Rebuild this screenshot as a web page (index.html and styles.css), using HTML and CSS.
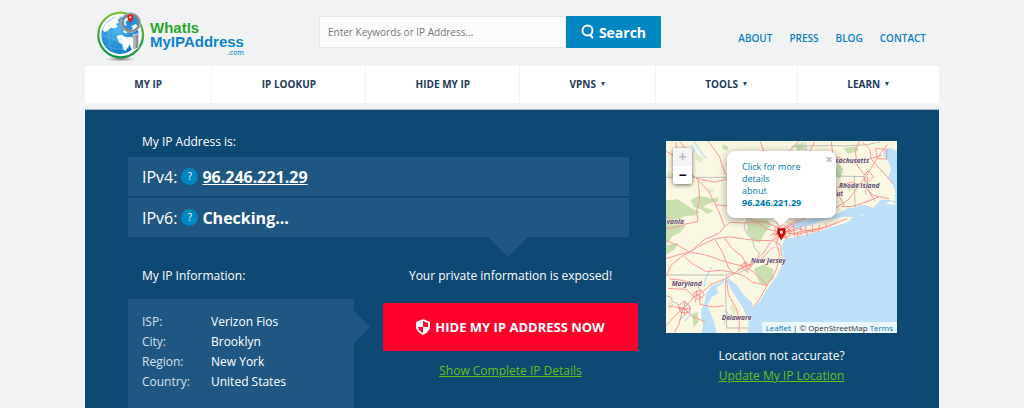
FILE: index.html
```html
<!DOCTYPE html>
<html lang="en">

<head>
  <meta charset="utf-8">
  <meta name="viewport" content="width=device-width, initial-scale=1">
  <title>What Is My IP Address</title>
  <link rel="stylesheet" href="styles.css">
</head>

<body>
  <header class="header">
    <a class="logo" href="#">
      <svg class="logo-globe" viewBox="0 0 150 156" aria-hidden="true">
        <defs>
          <linearGradient id="ring" x1="0" y1="0" x2="0" y2="1">
            <stop offset="0" stop-color="#7cc53a" />
            <stop offset="1" stop-color="#0d9344" />
          </linearGradient>
          <radialGradient id="sea" cx=".4" cy=".35" r=".75">
            <stop offset="0" stop-color="#4db8f0" />
            <stop offset="1" stop-color="#0a72c4" />
          </radialGradient>
          <radialGradient id="shade">
            <stop offset="0" stop-color="#777" />
            <stop offset="1" stop-color="#999" stop-opacity="0" />
          </radialGradient>
        </defs>
        <ellipse cx="74" cy="147" rx="46" ry="8" fill="url(#shade)" />
        <circle cx="74" cy="75" r="67" fill="#fff" stroke="url(#ring)" stroke-width="7" />
        <circle cx="72" cy="76" r="56" fill="url(#sea)" />
        <path fill="#fff" d="M19 58L30 40L45 28L63 21L76 22L64 30L70 36L60 43L66 50L55 55L44 53L35 63L25 66ZM62 78L76 74L90 82L104 80L112 88L104 98L96 112L88 124L82 118L80 104L68 96ZM84 60L94 66L90 71L81 66ZM100 84L128 82L126 98L118 112L108 120L102 106Z" />
        <g fill="none" stroke="#9bd5f5" stroke-width="1.5" opacity=".6">
          <path d="M17 74Q65 103 128 74M28 105Q68 130 116 105M46 27Q26 74 50 127M75 18Q66 75 83 132" />
        </g>
        <path fill="#8c9093" stroke="#fff" stroke-width="2" d="M111 74L128 71V114L111 119Z" />
        <path fill="#b5b9bb" d="M113 76L119 75V115L113 117Z" />
        <circle cx="104" cy="38" r="26" fill="#2590d9" stroke="#818689" stroke-width="9" />
        <circle cx="104" cy="38" r="29" fill="none" stroke="#c3c7c8" stroke-width="2" />
        <path fill="#e5f4fc" d="M83 34Q89 21 101 18L96 30L88 36L93 46L86 48ZM105 49L119 42L125 47Q118 59 106 60L111 54Z" />
        <path fill="#e1251b" d="M94 22Q94 13 103 13Q112 13 112 22Q112 29 103 40Q94 29 94 22Z" />
        <circle cx="103" cy="22" r="3" fill="#fff" />
      </svg>
      <span class="logo-text">
        <span class="logo-green">WhatIs</span>
        <span class="logo-blue">MyIPAddress</span>
        <span class="logo-com">.com</span>
      </span>
    </a>
    <form class="search">
      <input type="text" aria-label="Search" placeholder="Enter Keywords or IP Address...">
      <button type="submit">
        <svg class="search-icon" viewBox="0 0 14 16" aria-hidden="true">
          <circle cx="6.5" cy="6.5" r="5" />
          <path d="M9 11L12 14" />
        </svg>
        Search
      </button>
    </form>
    <nav class="top-links">
      <a href="#">ABOUT</a>
      <a href="#">PRESS</a>
      <a href="#">BLOG</a>
      <a href="#">CONTACT</a>
    </nav>
  </header>

  <nav class="menu">
    <a href="#">MY IP</a>
    <a href="#">IP LOOKUP</a>
    <a href="#">HIDE MY IP</a>
    <a href="#">VPNS <span class="caret"></span></a>
    <a href="#">TOOLS <span class="caret"></span></a>
    <a href="#">LEARN <span class="caret"></span></a>
  </nav>

  <main class="hero">
    <div class="details">
      <h2>My IP Address is:</h2>
      <div class="ip-list">
        <div class="ip-row">IPv4: <button class="help" type="button">?</button> <a href="#">96.246.221.29</a></div>
        <div class="ip-row">IPv6: <button class="help" type="button">?</button> <b>Checking...</b></div>
      </div>

      <div class="info-row">
        <section>
          <h2>My IP Information:</h2>
          <div class="info-card">
            <table>
              <tr>
                <th scope="row">ISP:</th>
                <td>Verizon Fios</td>
              </tr>
              <tr>
                <th scope="row">City:</th>
                <td>Brooklyn</td>
              </tr>
              <tr>
                <th scope="row">Region:</th>
                <td>New York</td>
              </tr>
              <tr>
                <th scope="row">Country:</th>
                <td>United States</td>
              </tr>
            </table>
          </div>
        </section>
        <section class="exposed">
          <p>Your private information is exposed!</p>
          <button class="hide-button" type="button">
            <svg viewBox="0 0 14 16" aria-hidden="true">
              <path fill="#fff" d="M7 0L14 3V7Q14 13 7 16Q0 13 0 7V3Z" />
              <path fill="#ff002b" d="M7 2L12 4V8H7ZM7 8V14Q3 12 2 8Z" />
            </svg>
            HIDE MY IP ADDRESS NOW
          </button>
          <a class="green-link" href="#">Show Complete IP Details</a>
        </section>
      </div>
    </div>

    <aside class="location">
      <div class="map">
        <svg class="map-tiles" viewBox="6 6 693 576" preserveAspectRatio="xMidYMid slice">
          <rect x="6" y="6" width="693" height="576" fill="#faf7e2" />
          <g fill="#c9dfb0">
            <path d="M6 184L40 181L82 208L107 218L96 229L61 232L40 244L65 260L48 281L26 291L6 317Z" />
            <path d="M79 183L103 171L124 174L145 180L163 174L161 188L132 194L108 210L91 204ZM95 199L135 209L150 217L128 224Z" />
            <path d="M251 240L314 242L320 260L301 284L286 312L267 304L249 278Z" />
            <path d="M269 390L302 376L327 391L329 418L306 441L287 432Z" />
            <path d="M6 319L43 312L31 332L6 347ZM84 524L100 519L104 548L89 565Z" />
            <path d="M391 18L420 10L422 30L401 35ZM521 70L538 91L528 119L514 111ZM538 28L578 22L584 36L553 44ZM176 14L193 23L190 34L175 30Z" />
          </g>
          <g fill="#e0ebc8">
            <path d="M13 95L30 107L22 120L6 116ZM97 41L118 59L110 73L94 60ZM134 147L151 153L145 162L129 156ZM16 484L28 497L15 516ZM205 491L219 511L209 526L198 507ZM544 139L569 130L578 145L555 158Z" />
          </g>
          <path fill="#bddff7" d="M699 35L679 26L660 34L657 47L676 73L681 94L672 115L680 127L693 151L694 187L677 183L650 183L628 207L606 199L587 198L571 207L552 207L520 225L481 236L440 239L398 242L381 265L395 269L444 257L480 243L512 239L544 233L567 234L557 246L533 256L501 265L459 279L414 290L365 300L354 318L356 353L351 386L336 415L310 450L289 485L269 507L264 491L240 468L217 437L199 423L192 411L188 424L200 449L220 480L239 511L254 551L251 582H699Z" />
          <path fill="#bddff7" d="M181 421L164 434L145 439L126 463L123 487L111 513L112 537L118 559L112 582H158L150 549L139 521L130 499L143 475L163 461L157 446L181 430Z" />
          <path fill="#faf7e2" d="M664 194L681 185L696 196L682 197ZM591 225L598 224L599 228L591 230Z" />
          <g fill="none" stroke="#bddff7" stroke-width="4">
            <path d="M91 7L116 47L126 58M83 17L94 42M61 548L80 525L76 503L61 487M179 558L192 525L182 512M143 384L124 420L121 442M483 65L496 128L506 173" />
          </g>
          <g fill="none" stroke="#a29eaa" stroke-width="2">
            <path d="M6 115H248L259 132L248 161L255 184L266 203L251 240L240 262L247 282L266 302L270 324L286 343L276 369L247 389L222 403L188 405L184 434L188 567H252M6 408H184M383 22L500 19L541 21L610 17L647 9M426 10L424 90M514 111L601 113L606 166M571 112L573 205" />
            <path d="M6 470L22 475L25 488L40 493L49 513L64 510L70 521L48 543" />
          </g>
          <g class="roads" fill="none" stroke="#fb9a97">
            <path d="M6 561L35 528L61 506L88 475L112 461L144 435L180 421L212 403L240 382L270 370L298 342L319 311L341 290L353 280L378 260L419 238L468 222L515 208L554 181L583 142L609 108L648 45L670 17" />
            <path d="M6 359L44 347L77 339L125 348L169 363L205 374L240 382M6 412L22 378L50 355L77 339L108 320L151 300L194 293L241 300L282 305L328 304" />
            <path d="M36 9L40 75L96 117L133 156L155 197L170 231L181 263L165 283L122 301L77 339L44 320L6 305" />
            <path d="M96 117L151 130L200 117L270 151L315 202L347 270M132 6L166 52L183 104L209 117L273 95L361 50L405 6M289 7L307 59L367 96L405 118L422 175L410 229L353 280" />
            <path d="M102 122L107 177L98 217L102 247L61 256L29 266L6 268M155 197L216 204L271 246L310 270L348 280M182 263L198 250L238 252L302 248L358 273" />
            <path d="M353 280L336 311L346 345L340 383L331 405L313 433L287 479L270 504M248 383L282 411L311 439M328 304L350 318L352 350M213 402L238 410L266 430L311 440" />
            <path d="M112 461L98 436L56 424L17 420M107 463L108 496L146 504L180 500M89 473L66 451L12 448M62 508L12 501M58 504L45 555L31 581M63 509L84 532L123 548M188 423L193 467L216 506L226 547L225 579" />
            <path d="M208 403L192 384L176 340L151 300M249 379L235 353L203 327L182 298M246 382L288 364L329 323M212 401L169 394L127 398L86 375L61 352M353 280L399 286L426 280L460 275L499 259L550 238" />
            <path d="M398 267L430 275L486 264L514 253M401 278L402 296M424 261L430 292M467 258L462 280M502 8L507 52L499 91L515 149L541 202M507 52L558 65L605 63L653 49M520 145L562 129L597 137L627 169L676 179M595 9L618 31L621 59L648 90L686 133M532 203L566 202L606 189L643 174" />
            <path d="M610 114L612 153L632 185M586 6L574 36L580 81L604 109M451 8L438 38L397 62M6 233L37 253L57 239M7 37L37 54L65 48M47 7L65 29M38 68L70 74" />
          </g>
          <g class="roads streets" fill="none" stroke="#ff7774">
            <path d="M43 499L62 487L79 502L74 521L50 521ZM89 461L113 453L121 468L106 481L88 477ZM229 380L246 370L263 384L245 397ZM332 268L359 258L382 277L371 295L341 293ZM326 284L399 274M346 249L370 300M335 302L391 259" />
            <path d="M45 508L81 510M61 484V528M92 463L118 478M99 452L94 491M220 392L269 374M239 367L253 403M634 28L669 31L668 60L640 59ZM613 94L628 114L610 132L598 112Z" />
            <path d="M318 290L400 268M322 300L380 250M360 262L364 300M375 262L378 296M388 262L392 292M410 262L412 290M380 284L470 268M445 258L447 282M484 252L488 266" />
          </g>
          <g class="places">
            <text x="8" y="256">vania</text>
            <text x="514" y="72">sachusetts</text>
            <text x="525" y="147">Rhode Island</text>
            <text x="517" y="172">ut</text>
            <text x="261" y="372">New Jersey</text>
            <text x="23" y="441">Maryland</text>
            <text x="173" y="544">Delaware</text>
          </g>
          <path fill="#d40000" stroke="#9f0800" stroke-width="2" d="M341 269H363V284L352 302L341 284Z" />
          <rect x="348" y="275" width="8" height="9" fill="#fff" />
        </svg>
        <div class="zoom-box">
          <button type="button" aria-label="Zoom in" disabled>+</button>
          <button type="button" aria-label="Zoom out">−</button>
        </div>
        <div class="popup">
          <a href="#">Click for more details<br>about <b>96.246.221.29</b></a>
          <button type="button" aria-label="Close">×</button>
        </div>
        <div class="credit"><a href="#">Leaflet</a> | © OpenStreetMap <a href="#">Terms</a></div>
      </div>
      <p>Location not accurate?</p>
      <a class="green-link" href="#">Update My IP Location</a>
    </aside>
  </main>
</body>

</html>
```

FILE: styles.css
```css
* {
  box-sizing: border-box;
  margin: 0;
  padding: 0;
}

body {
  padding: 0 8.3%;
  font-family: "Open Sans", "Noto Sans", sans-serif;
  font-size: 12px;
  background-color: #f1f2f4;
  color: #fff;
}

button,
input {
  font-family: inherit;
}

button {
  border: none;
  cursor: pointer;
}

/* header */
.header {
  display: flex;
  align-items: flex-start;
  height: 66px;
  padding: 0 13px 0 11px;
}

.logo {
  display: flex;
  gap: 4px;
  width: 223px;
  padding-top: 10px;
  text-decoration: none;
}

.logo-globe {
  width: 50px;
  height: 52px;
}

.logo-text {
  display: flex;
  flex-direction: column;
  padding-top: 11px;
  font-family: "Liberation Sans", Arial, sans-serif;
  font-size: 15px;
  font-weight: bold;
  line-height: 14px;
}

.logo-green {
  color: #2ba62c;
}

.logo-blue {
  color: #0d83cc;
}

.logo-com {
  align-self: flex-end;
  font-family: "Open Sans", sans-serif;
  font-size: 7px;
  font-weight: 600;
  line-height: 8px;
  color: #2d92cf;
}

.search {
  display: flex;
  flex: 1;
  max-width: 342px;
  height: 32px;
  margin-top: 16px;
}

.search input {
  flex: 1;
  min-width: 0;
  padding: 0 8px;
  border: 1px solid #e7e8ea;
  background-color: #fcfcfc;
  font-size: 10px;
}

.search input::placeholder {
  color: #757575;
}

.search button {
  display: flex;
  align-items: center;
  justify-content: center;
  gap: 4px;
  width: 95px;
  border-radius: 1px;
  background-color: #0087c1;
  color: #fff;
  font-size: 14px;
  font-weight: bold;
}

.search-icon {
  width: 14px;
  height: 16px;
  fill: none;
  stroke: #fff;
  stroke-width: 2;
}

.top-links {
  display: flex;
  gap: 17px;
  margin-left: auto;
  padding-top: 30px;
}

.top-links a {
  color: #0f7fbf;
  font-size: 10px;
  font-weight: 600;
  line-height: 16px;
  text-decoration: none;
}

/* menu */
.menu {
  display: flex;
  gap: 1px;
  margin-bottom: 6px;
}

.menu a {
  flex: 1 1 auto;
  padding: 0 44px;
  background-color: #fff;
  color: #23395a;
  font-size: 10px;
  font-weight: bold;
  line-height: 37px;
  text-align: center;
  text-decoration: none;
  white-space: nowrap;
}

.caret {
  display: inline-block;
  margin: 0 1px 0 2px;
  border: 2px solid transparent;
  border-top: 4px solid #23496f;
  border-bottom: none;
  vertical-align: 2px;
}

/* blue area */
.hero {
  display: grid;
  grid-template-columns: 1fr 231px;
  gap: 28px;
  padding: 20px 42px 0 43px;
  border-top: 1px solid #a9b7c5;
  background-color: #0e4973;
}

h2 {
  font-size: 12px;
  font-weight: normal;
  line-height: 24px;
  padding-left: 14px;
}

.ip-list {
  position: relative;
  display: grid;
  gap: 2px;
  margin: 3px 9px 27px 0;
}

.ip-list::after {
  content: "";
  position: absolute;
  top: 100%;
  right: 101px;
  border: 20px solid transparent;
  border-top-color: #1f5782;
  border-bottom: none;
}

.ip-row {
  display: flex;
  align-items: center;
  gap: 4px;
  height: 39px;
  padding-left: 14px;
  background-color: #1f5782;
  font-size: 16px;
}

.ip-row a {
  color: #fff;
  font-weight: bold;
}

.help {
  width: 17px;
  height: 17px;
  border-radius: 50%;
  background-color: #0087c1;
  color: #fff;
  font-size: 10px;
  line-height: 17px;
}

.info-row {
  display: grid;
  grid-template-columns: 226px 1fr;
  gap: 29px;
}

.info-card {
  position: relative;
  margin-top: 11px;
  padding: 13px 14px 16px;
  background-color: #1f5782;
}

.info-card::after {
  content: "";
  position: absolute;
  top: 12px;
  left: 100%;
  border: 16px solid transparent;
  border-left-color: #1f5782;
  border-right: none;
}

.info-card table {
  border-collapse: collapse;
}

.info-card th {
  width: 69px;
  color: #d5e0e9;
  font-weight: normal;
  text-align: left;
}

.info-card td,
.info-card th {
  line-height: 20px;
}

.exposed {
  display: flex;
  flex-direction: column;
  align-items: center;
  line-height: 24px;
}

.hide-button {
  display: flex;
  align-items: center;
  justify-content: center;
  gap: 5px;
  width: 100%;
  height: 48px;
  margin: 15px 0 8px;
  border-radius: 2px;
  background-color: #ff002b;
  color: #fff;
  font-size: 13px;
  font-weight: bold;
}

.hide-button svg {
  width: 14px;
  height: 16px;
}

.green-link {
  color: #66bf16;
}

/* map */
.location {
  padding-top: 11px;
  line-height: 20px;
  text-align: center;
}

.map {
  position: relative;
  margin-bottom: 13px;
  overflow: hidden;
  color: #333;
}

.map-tiles {
  display: block;
  width: 100%;
}

.roads {
  stroke-width: 3;
}

.streets {
  stroke-width: 2;
}

.places {
  fill: #665078;
  stroke: #f8f3e2;
  stroke-width: 3px;
  paint-order: stroke;
  font-size: 20px;
  font-style: italic;
  font-weight: bold;
}

.zoom-box {
  position: absolute;
  top: 7px;
  left: 7px;
  display: grid;
  width: 19px;
  border-radius: 3px;
  overflow: hidden;
  box-shadow: 0 1px 4px rgba(0, 0, 0, 0.6);
}

.zoom-box button {
  height: 18px;
  background-color: #fff;
  color: #000;
  font-size: 14px;
  font-weight: bold;
  line-height: 18px;
}

.zoom-box button:disabled {
  background-color: #f4f4f4;
  color: #bbb;
}

.popup {
  position: absolute;
  top: 10px;
  left: 61px;
  width: 109px;
  padding: 10px 24px 9px 15px;
  border-radius: 8px;
  background-color: #fff;
  box-shadow: 0 2px 8px rgba(0, 0, 0, 0.4);
  font-size: 9px;
  line-height: 12px;
  text-align: left;
}

.popup::after {
  content: "";
  position: absolute;
  top: 100%;
  left: 46px;
  border: 8px solid transparent;
  border-top-color: #fff;
  border-bottom: none;
}

.popup a {
  color: #0078a8;
  text-decoration: none;
}

.popup button {
  position: absolute;
  top: 2px;
  right: 3px;
  background: none;
  color: #b5b5b5;
  font-size: 13px;
  font-weight: bold;
  line-height: 13px;
}

.credit {
  position: absolute;
  right: 0;
  bottom: 0;
  padding: 0 4px;
  background-color: rgba(255, 255, 255, 0.7);
  font-size: 8px;
  line-height: 11px;
  white-space: nowrap;
}

.credit a {
  color: #0078a8;
  text-decoration: none;
}
```
